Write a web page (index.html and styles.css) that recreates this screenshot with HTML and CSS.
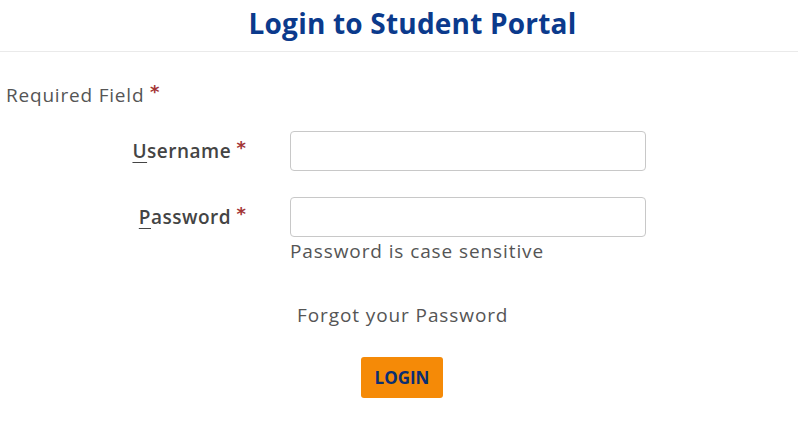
FILE: index.html
```html
<!DOCTYPE html>
<html>
<head>
<meta charset="utf-8">
<link rel="stylesheet" href="styles.css">
</head>
<body>
<header class="header">
  <h1 class="title">Login to Student Portal</h1>
</header>
<main class="main">
  <p class="required">Required Field <span class="star">*</span></p>
  <form class="form">
    <label class="label" for="u"><span class="ul">U</span>sername <span class="star">*</span></label>
    <div class="field"><input id="u" class="input" type="text"></div>
    <label class="label" for="p"><span class="ul">P</span>assword <span class="star">*</span></label>
    <div class="field">
      <input id="p" class="input" type="password">
      <div class="hint">Password is case sensitive</div>
    </div>
    <div></div>
    <div class="forgot">Forgot your Password</div>
    <div></div>
    <div class="btnwrap"><button class="btn" type="button">LOGIN</button></div>
  </form>
</main>
</body>
</html>
```
FILE: styles.css
```css
html, body { margin: 0; padding: 0; background: #fff; }
body { font-family: "Open Sans", "Lato", sans-serif; color: #555; }
.header { border-bottom: 1px solid #eaeaea; height: 51px; display: flex; justify-content: center; }
.title { margin: 0; padding-left: 27px; font-size: 28px; letter-spacing: 0.2px; line-height: 46px; font-weight: 700; color: #0b3a8c; }
.main { padding: 0 6px; }
.required { margin: 29px 0 0; font-size: 19px; letter-spacing: 0.8px; line-height: 28px; }
.star { color: #a33535; font-family: "DejaVu Sans", sans-serif; font-size: 18px; font-weight: 700; letter-spacing: 0; position: relative; top: -4px; }
.form { display: grid; grid-template-columns: 242px 356px; column-gap: 42px; row-gap: 25px; margin-top: 21px; }
.label { text-align: right; font-size: 19px; font-weight: 600; letter-spacing: 0.5px; color: #444; line-height: 40px; padding-right: 2px; }
.ul { text-decoration: underline; text-underline-offset: 4px; }
.input { display: block; box-sizing: border-box; width: 356px; height: 40px; border: 1px solid #c8c8c8; border-radius: 4px; margin: 0; }
.hint { font-size: 19px; letter-spacing: 0.9px; line-height: 28px; margin-top: 0; }
.forgot { font-size: 19px; letter-spacing: 0.9px; line-height: 28px; padding-left: 7px; margin-top: 11px; }
.btnwrap { padding-left: 71px; margin-top: 3px; }
.btn { width: 82px; height: 41px; background: #f58a07; border: 0; border-radius: 3px; color: #0b2e72; font-family: "Open Sans", sans-serif; font-size: 17px; font-weight: 700; padding: 0; }
```
